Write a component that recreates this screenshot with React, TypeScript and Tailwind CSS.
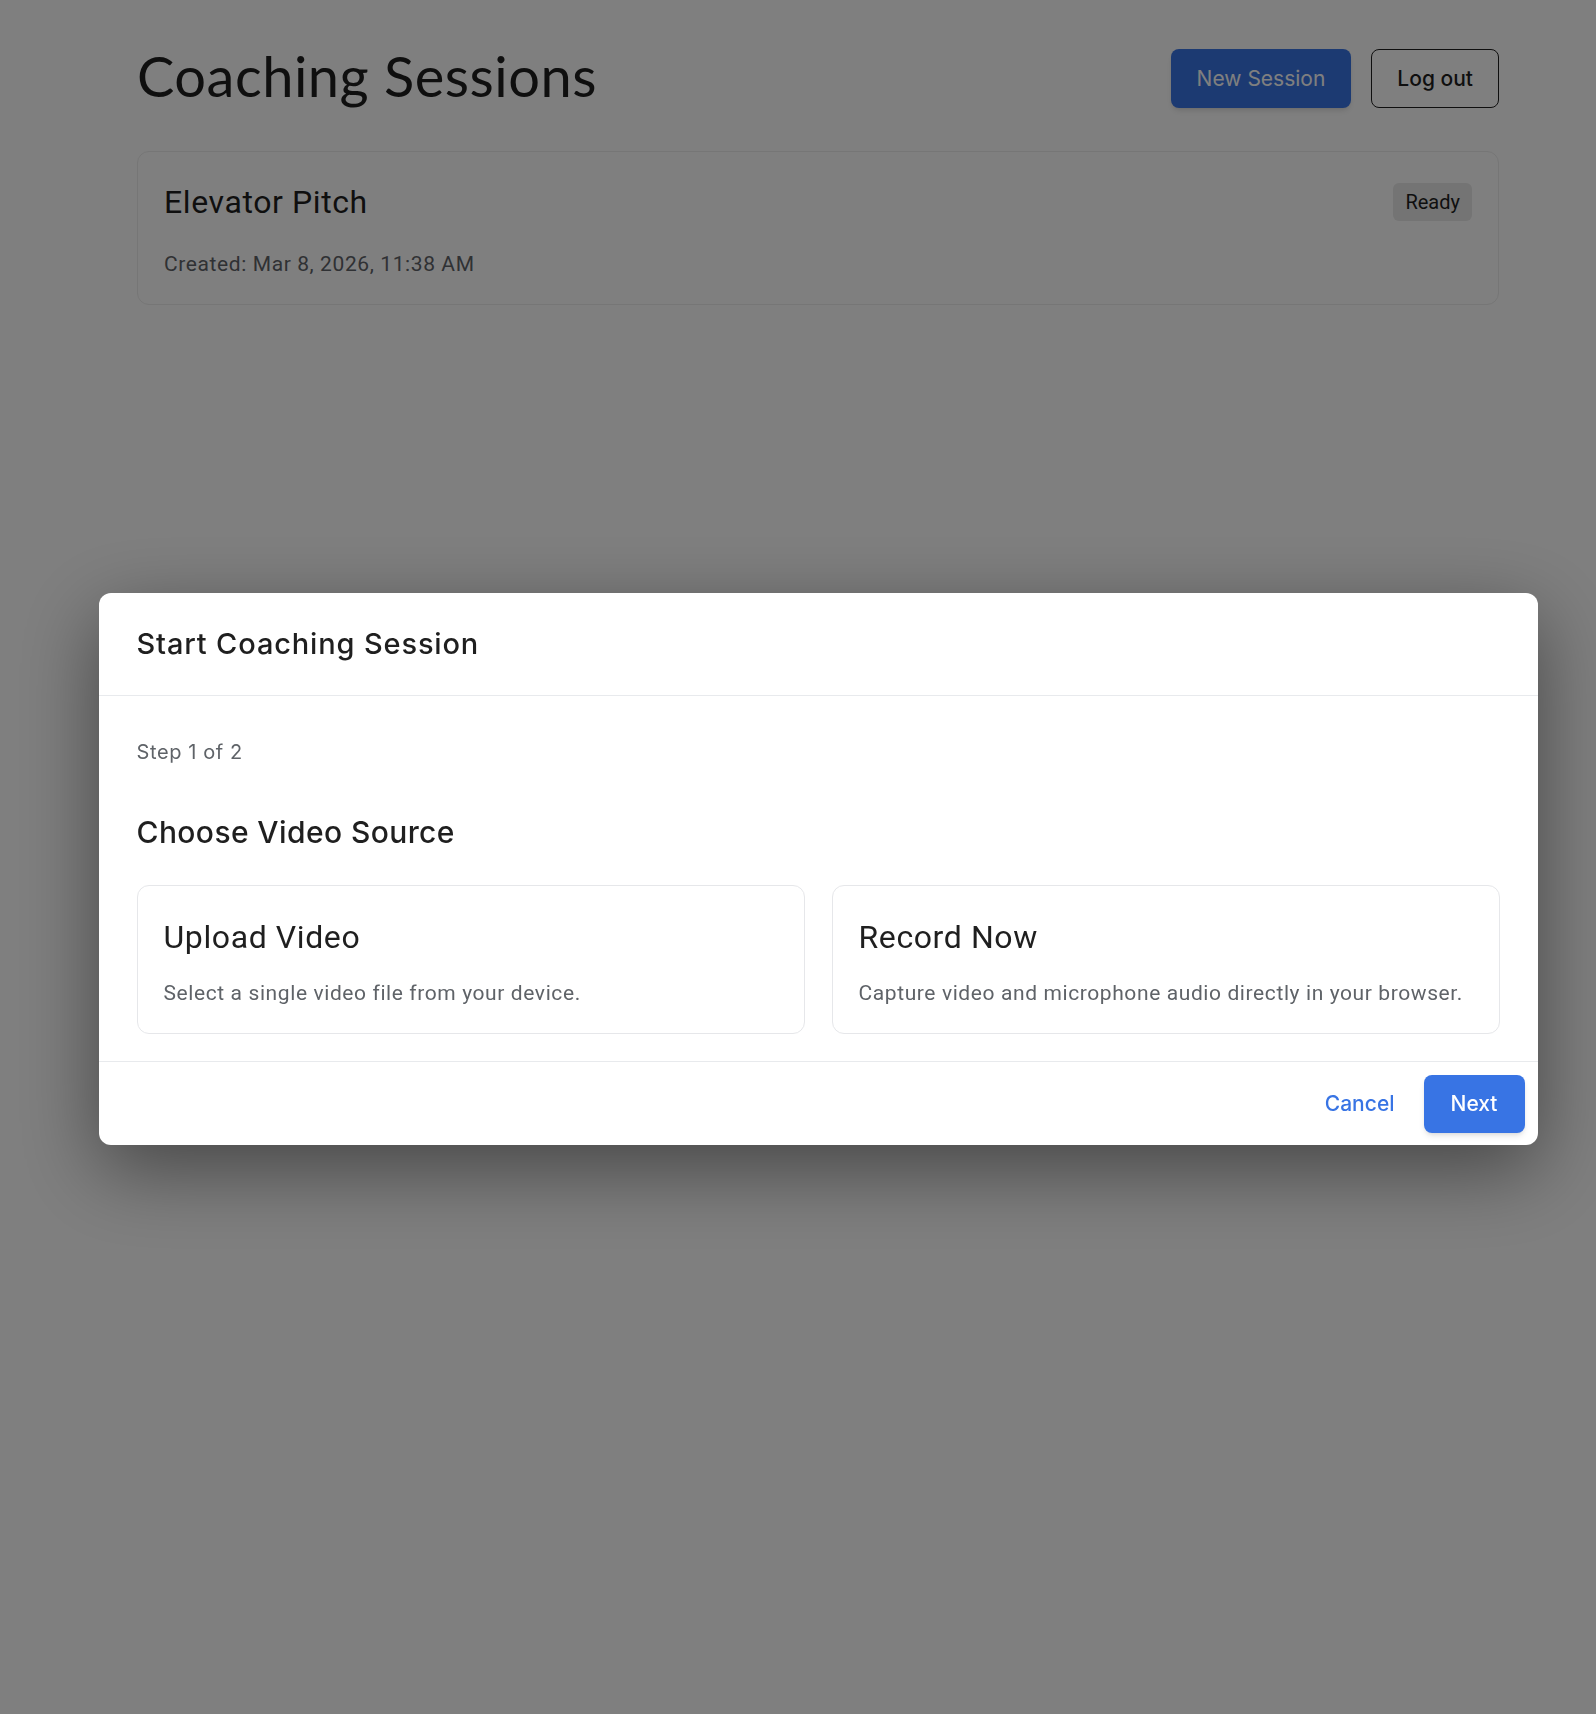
const display = "font-['Lato','Open_Sans',sans-serif]";
const heading = "font-['Inter','Open_Sans',sans-serif]";
const body = "font-['Roboto','Liberation_Sans',sans-serif]";

function SourceCard({ title, text }: { title: string; text: string }) {
  return (
    <div className="rounded-xl border border-[#e6e7ea] bg-white px-[26px] pt-[32px] pb-[26px]">
      <h3 className={`${body} text-[32px] leading-[38px] tracking-[0.6px] text-[#1f1f1f]`}>{title}</h3>
      <p className={`${body} mt-[23px] text-[21px] leading-[28px] tracking-[0.6px] text-[#5f6368]`}>{text}</p>
    </div>
  );
}

export default function App() {
  return (
    <div className="min-h-[1714px] bg-white">
      <div className="ml-[137px] w-[1362px] pt-[42px]">
        <div className="flex items-center justify-between">
          <h1 className={`${display} text-[56px] leading-[67px] tracking-[0.5px] text-[#1f1f1f]`}>Coaching Sessions</h1>
          <div className="mt-[6px] flex items-center gap-5">
            <button className={`${heading} h-[59px] rounded-lg bg-[#3874e4] px-[26px] text-[21px] text-white shadow-md`}>
              New Session
            </button>
            <button className={`${heading} h-[59px] rounded-lg border border-[#1f1f1f] px-[25px] text-[21px] font-medium text-[#1f1f1f]`}>
              Log out
            </button>
          </div>
        </div>

        <div className="mt-[42px] rounded-xl border border-[#ececec] bg-white px-[26px] pt-[31px] pb-[26px]">
          <div className="flex items-center justify-between">
            <h2 className={`${body} text-[32px] leading-[38px] tracking-[0.6px] text-[#1f1f1f]`}>Elevator Pitch</h2>
            <span className={`${body} rounded-md bg-[#e8e8e8] px-3 py-[7px] text-[20px] leading-[24px] text-[#1f1f1f]`}>
              Ready
            </span>
          </div>
          <p className={`${body} mt-[29px] text-[21px] leading-[28px] tracking-[0.6px] text-[#5f6368]`}>
            Created: Mar 8, 2026, 11:38 AM
          </p>
        </div>
      </div>

      <div className="fixed inset-0 flex items-center justify-center bg-black/50 pl-[40px] pt-[23px]">
        <div className="w-[1439px] overflow-hidden rounded-xl bg-white shadow-[0_24px_80px_rgba(0,0,0,0.45)]">
          <div className="flex h-[103px] items-center border-b border-[#e8eaed] px-[38px]">
            <h2 className={`${heading} text-[29px] leading-[34px] font-medium tracking-[0.85px] text-[#1f1f1f]`}>
              Start Coaching Session
            </h2>
          </div>
          <div className="border-b border-[#e8eaed] px-[38px] pt-[42px] pb-[27px]">
            <p className={`${heading} text-[20px] leading-[28px] tracking-[0.6px] text-[#5f6368]`}>Step 1 of 2</p>
            <h3 className={`${heading} mt-[49px] text-[30px] leading-[34px] font-medium tracking-[0.4px] text-[#1f1f1f]`}>
              Choose Video Source
            </h3>
            <div className="mt-[36px] grid grid-cols-2 gap-[27px]">
              <SourceCard title="Upload Video" text="Select a single video file from your device." />
              <SourceCard title="Record Now" text="Capture video and microphone audio directly in your browser." />
            </div>
          </div>
          <div className="flex items-center justify-end gap-[2px] px-[13px] pt-[13px] pb-[12px]">
            <button className={`${heading} h-[58px] rounded-lg px-[27px] text-[21px] font-medium text-[#3874e4]`}>Cancel</button>
            <button className={`${heading} h-[58px] rounded-lg bg-[#3874e4] px-[27px] text-[21px] font-medium text-white shadow-md`}>
              Next
            </button>
          </div>
        </div>
      </div>
    </div>
  );
}
